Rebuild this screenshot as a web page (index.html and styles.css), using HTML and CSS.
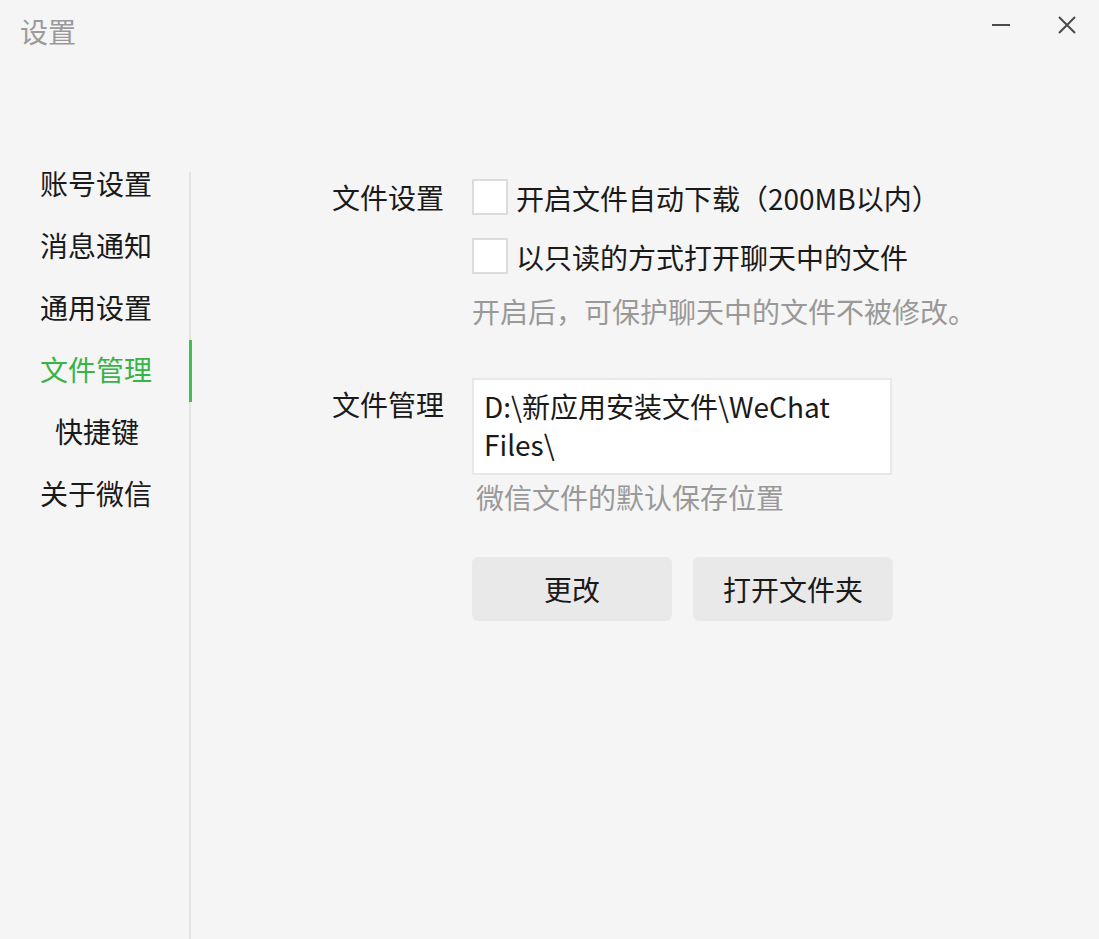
FILE: index.html
```html
<!DOCTYPE html>
<html lang="zh-CN">
<head>
    <meta charset="UTF-8">
    <meta name="viewport" content="width=device-width, initial-scale=1.0">
    <title>设置</title>
    <link rel="stylesheet" href="styles.css">
</head>
<body>

<div class="window">
    <div class="title-bar">
        <div class="title">设置</div>
        <div class="window-controls">
            <button class="win-btn" title="最小化">
                <svg width="20" height="20" viewBox="0 0 20 20"><path d="M1 10h18" stroke="#4a4a4a" stroke-width="2"/></svg>
            </button>
            <button class="win-btn" title="关闭">
                <svg width="20" height="20" viewBox="0 0 20 20"><path d="M2 2l16 16M18 2L2 18" stroke="#4a4a4a" stroke-width="2"/></svg>
            </button>
        </div>
    </div>

    <div class="main">
        <div class="sidebar">
            <ul class="nav">
                <li class="nav-item">账号设置</li>
                <li class="nav-item">消息通知</li>
                <li class="nav-item">通用设置</li>
                <li class="nav-item active">文件管理</li>
                <li class="nav-item short">快捷键</li>
                <li class="nav-item">关于微信</li>
            </ul>
        </div>

        <div class="content">
            <div class="setting-row">
                <div class="label">文件设置</div>
                <div class="controls">
                    <label class="check-row">
                        <span class="checkbox"></span>
                        <span class="check-text">开启文件自动下载（200MB以内）</span>
                    </label>
                    <label class="check-row">
                        <span class="checkbox"></span>
                        <span class="check-text">以只读的方式打开聊天中的文件</span>
                    </label>
                    <div class="hint">开启后，可保护聊天中的文件不被修改。</div>
                </div>
            </div>

            <div class="setting-row files">
                <div class="label">文件管理</div>
                <div class="controls">
                    <div class="path-box">D:\新应用安装文件\WeChat Files\</div>
                    <div class="hint path-hint">微信文件的默认保存位置</div>
                    <div class="buttons">
                        <button class="btn">更改</button>
                        <button class="btn">打开文件夹</button>
                    </div>
                </div>
            </div>
        </div>
    </div>
</div>

</body>
</html>
```

FILE: styles.css
```css
* {
    box-sizing: border-box;
}

body {
    margin: 0;
    font-family: "Noto Sans CJK SC", "Open Sans", sans-serif;
    background-color: #f5f5f5;
    color: #1a1a1a;
    font-size: 28px;
}

.window {
    height: 100vh;
    display: flex;
    flex-direction: column;
    overflow: hidden;
}

.title-bar {
    display: flex;
    justify-content: space-between;
    align-items: flex-start;
    height: 172px;
    flex-shrink: 0;
}

.title {
    margin: 11px 0 0 20px;
    line-height: 40px;
    color: #9a9a9a;
}

.window-controls {
    display: flex;
    gap: 46px;
    margin: 15px 22px 0 0;
}

.win-btn {
    width: 20px;
    height: 20px;
    padding: 0;
    border: none;
    background: none;
    cursor: pointer;
}

.win-btn svg {
    display: block;
}

.main {
    flex: 1;
    display: flex;
}

.sidebar {
    width: 191px;
    flex-shrink: 0;
    border-right: 2px solid #e3e3e3;
}

.nav {
    list-style: none;
    margin: -18px 0 0 0;
    padding: 0;
}

.nav-item {
    height: 62px;
    line-height: 58px;
    width: 192px;
    padding-left: 40px;
    margin-right: -2px;
    border-right: 3px solid transparent;
    cursor: pointer;
}

.nav-item.short {
    padding-left: 55px;
}

.nav-item.active {
    color: #38b348;
    border-right-color: #3fbf4b;
}

.content {
    padding: 5px 0 0 141px;
}

.setting-row {
    display: flex;
    gap: 28px;
}

.label {
    width: 112px;
    flex-shrink: 0;
    line-height: 40px;
}

.controls {
    display: flex;
    flex-direction: column;
}

.check-row {
    display: flex;
    align-items: center;
    gap: 8px;
    height: 40px;
    line-height: 40px;
    margin-bottom: 19px;
    cursor: pointer;
}

.check-text {
    padding-top: 2px;
}

.check-row + .check-row {
    margin-bottom: 15px;
}

.checkbox {
    width: 36px;
    height: 36px;
    background-color: #fff;
    border: 2px solid #dcdcdc;
    flex-shrink: 0;
}

.hint {
    color: #999;
    line-height: 40px;
}

.files {
    margin-top: 47px;
}

.files .label {
    padding-top: 6px;
}

.path-box {
    width: 420px;
    height: 97px;
    padding: 7px 10px;
    background-color: #fff;
    border: 2px solid #e8e8e8;
    line-height: 38px;
}

.path-hint {
    margin-top: 2px;
    padding-left: 4px;
}

.buttons {
    display: flex;
    gap: 21px;
    margin-top: 40px;
}

.btn {
    width: 200px;
    height: 64px;
    border: none;
    border-radius: 6px;
    background-color: #e9e9e9;
    font-family: inherit;
    font-size: 28px;
    color: #1a1a1a;
    cursor: pointer;
}
```
